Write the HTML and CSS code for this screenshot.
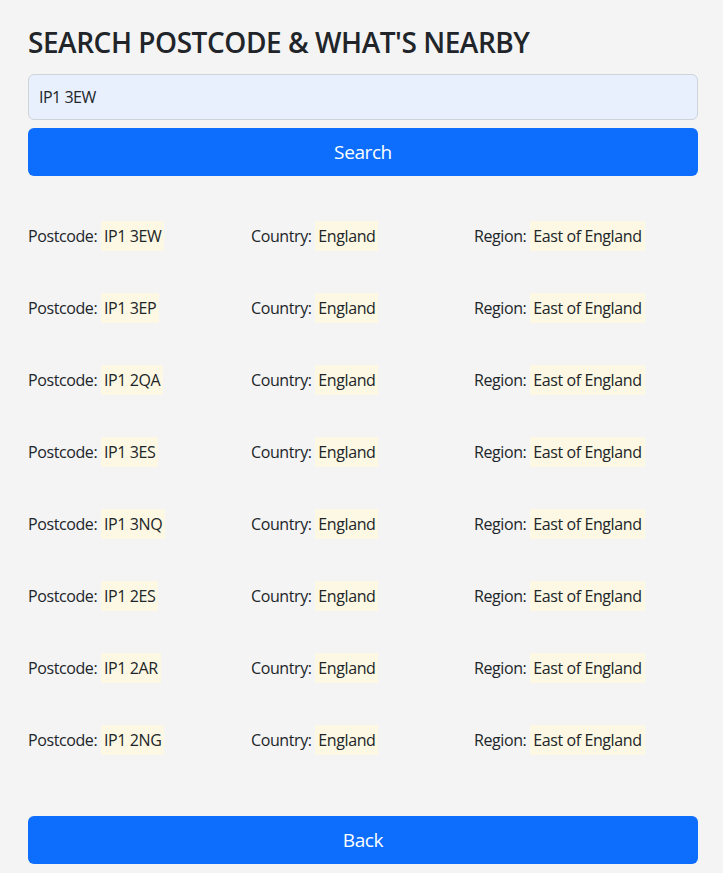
FILE: index.html
```html
<!DOCTYPE html>
<html lang="en">
<head>
<meta charset="utf-8">
<title>Search postcode</title>
<link rel="stylesheet" href="styles.css">
</head>
<body>
<main class="page">
  <h1 class="title">SEARCH POSTCODE &amp; WHAT'S NEARBY</h1>
  <form class="search">
    <input class="search-input" type="text" value="IP1 3EW">
    <button class="btn" type="button">Search</button>
  </form>
  <section class="results">
    <div class="row"><div class="cell">Postcode: <mark>IP1 3EW</mark></div><div class="cell">Country: <mark>England</mark></div><div class="cell">Region: <mark>East of England</mark></div></div>
    <div class="row"><div class="cell">Postcode: <mark>IP1 3EP</mark></div><div class="cell">Country: <mark>England</mark></div><div class="cell">Region: <mark>East of England</mark></div></div>
    <div class="row"><div class="cell">Postcode: <mark>IP1 2QA</mark></div><div class="cell">Country: <mark>England</mark></div><div class="cell">Region: <mark>East of England</mark></div></div>
    <div class="row"><div class="cell">Postcode: <mark>IP1 3ES</mark></div><div class="cell">Country: <mark>England</mark></div><div class="cell">Region: <mark>East of England</mark></div></div>
    <div class="row"><div class="cell">Postcode: <mark>IP1 3NQ</mark></div><div class="cell">Country: <mark>England</mark></div><div class="cell">Region: <mark>East of England</mark></div></div>
    <div class="row"><div class="cell">Postcode: <mark>IP1 2ES</mark></div><div class="cell">Country: <mark>England</mark></div><div class="cell">Region: <mark>East of England</mark></div></div>
    <div class="row"><div class="cell">Postcode: <mark>IP1 2AR</mark></div><div class="cell">Country: <mark>England</mark></div><div class="cell">Region: <mark>East of England</mark></div></div>
    <div class="row"><div class="cell">Postcode: <mark>IP1 2NG</mark></div><div class="cell">Country: <mark>England</mark></div><div class="cell">Region: <mark>East of England</mark></div></div>
  </section>
  <button class="btn back" type="button">Back</button>
</main>
</body>
</html>
```
FILE: styles.css
```css
html, body {
  margin: 0;
  padding: 0;
  background: #f4f4f4;
}
body {
  font-family: "Open Sans", "Noto Sans", sans-serif;
  color: #212529;
  font-size: 16px;
  line-height: 1.5;
}
.page {
  padding: 26px 25px 0 28px;
}
.title {
  margin: 0 0 14px;
  font-size: 28px;
  font-weight: 600;
  line-height: 1.2;
  letter-spacing: -0.45px;
}
.search {
  display: flex;
  flex-direction: column;
  gap: 8px;
  margin: 0;
}
.search-input {
  box-sizing: border-box;
  height: 46px;
  width: 100%;
  padding: 0 10px;
  border: 1px solid #ced4da;
  border-radius: 6px;
  background: #e8f0fe;
  font-family: inherit;
  font-size: 16px;
  color: #212529;
  letter-spacing: -0.5px;
}
.btn {
  display: block;
  box-sizing: border-box;
  width: 100%;
  height: 48px;
  border: 0;
  border-radius: 6px;
  background: #0d6efd;
  color: #fff;
  font-family: inherit;
  font-size: 19px;
  letter-spacing: -0.4px;
}
.results {
  margin-top: 24px;
}
.row {
  display: grid;
  grid-template-columns: 223px 223px 1fr;
  padding: 24px 0;
  font-size: 16px;
  line-height: 24px;
  letter-spacing: -0.4px;
}
mark {
  background: #fcf8e3;
  color: #212529;
  padding: 4px 3px;
}
.back {
  margin-top: 40px;
}
```
